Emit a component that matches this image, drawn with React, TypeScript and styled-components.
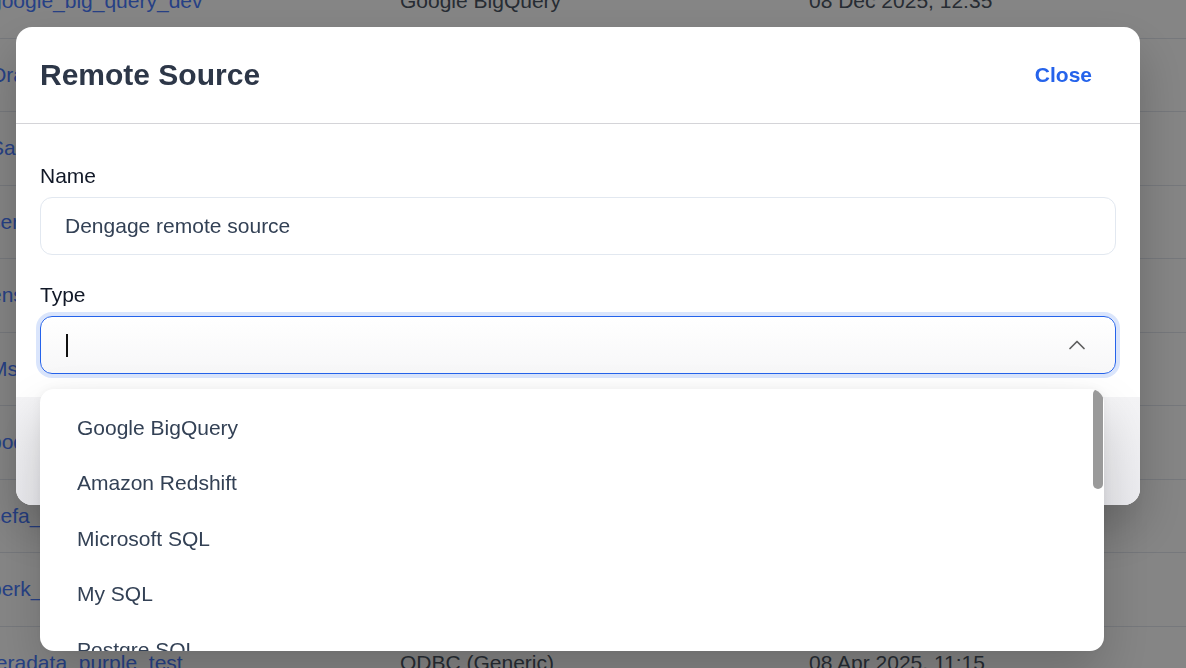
import React from "react";
import styled, { createGlobalStyle } from "styled-components";
import { ChevronUp } from "lucide-react";

const GlobalStyle = createGlobalStyle`
  * { box-sizing: border-box; }
  html, body { margin: 0; padding: 0; background: #ffffff; }
  body {
    font-family: "Liberation Sans", Arial, Helvetica, sans-serif;
    overflow: hidden;
  }
`;

const Page = styled.div`
  position: relative;
  width: 1186px;
  height: 668px;
  overflow: hidden;
  background: #ffffff;
`;

/* Sources table behind the dialog (scrolled part way down) */
const Table = styled.div`
  margin-top: -35px;
  margin-left: -10px;
`;

const Row = styled.div`
  display: grid;
  grid-template-columns: 410px 409px 1fr;
  align-items: center;
  height: 73.5px;
  border-bottom: 1px solid #e2e6ee;
  font-size: 21px;
`;

const SourceLink = styled.a`
  color: #4a7cff;
  text-decoration: none;
  white-space: nowrap;
`;

const Cell = styled.span`
  color: #4b5563;
  white-space: nowrap;
`;

const Backdrop = styled.div`
  position: fixed;
  inset: 0;
  background: rgba(0, 0, 0, 0.48);
  display: flex;
  align-items: flex-start;
  padding: 27px 46px 0 16px;
`;

const Modal = styled.div`
  width: 1124px;
  background: #ffffff;
  border-radius: 16px;
  box-shadow: 0 24px 48px rgba(0, 0, 0, 0.22);
  display: flex;
  flex-direction: column;
`;

const Header = styled.header`
  height: 97px;
  display: flex;
  align-items: center;
  justify-content: space-between;
  padding: 0 0 0 24px;
  border-bottom: 1px solid #d4d4d8;
`;

const Title = styled.h2`
  margin: 0;
  font-size: 30px;
  font-weight: 700;
  color: #2d3748;
`;

const CloseButton = styled.button`
  border: none;
  background: none;
  padding: 8px 48px 8px 24px;
  font-family: inherit;
  font-size: 21px;
  font-weight: 700;
  color: #2563eb;
  cursor: pointer;
`;

const Body = styled.div`
  display: flex;
  flex-direction: column;
  gap: 28px;
  padding: 40px 24px 23px;
`;

const Field = styled.div`
  display: flex;
  flex-direction: column;
  gap: 9px;
`;

const Label = styled.label`
  font-size: 21px;
  line-height: 24px;
  color: #111827;
`;

const TextInput = styled.input`
  height: 58px;
  width: 100%;
  border: 1px solid #e2e8f0;
  border-radius: 12px;
  padding: 0 24px;
  font-family: inherit;
  font-size: 21px;
  color: #334155;
  background: #ffffff;
  outline: none;
`;

const SelectWrap = styled.div`
  position: relative;
`;

const SelectControl = styled.div`
  height: 58px;
  display: flex;
  align-items: center;
  justify-content: space-between;
  padding: 0 24px 0 24.5px;
  border: 1.5px solid #2563eb;
  border-radius: 12px;
  background: linear-gradient(#ffffff, #f7f7f8);
  box-shadow: 0 0 0 4px rgba(37, 99, 235, 0.17);
`;

const Caret = styled.span`
  width: 2px;
  height: 23px;
  background: #111111;
`;

const Chevron = styled(ChevronUp)`
  color: #5f5f5f;
`;

/* Dropdown panel floating under the combobox */
const Popover = styled.div`
  position: absolute;
  top: calc(100% + 15px);
  left: 0;
  right: 12px;
  background: #ffffff;
  border-radius: 14px;
  overflow: hidden;
  box-shadow: 0 0 10px rgba(0, 0, 0, 0.05), 0 26px 52px rgba(0, 0, 0, 0.18);
  z-index: 2;
`;

const Listbox = styled.ul`
  max-height: 262px;
  margin: 0;
  padding: 11px 0;
  list-style: none;
  overflow-y: auto;
  scrollbar-width: none;
`;

const ScrollThumb = styled.span`
  position: absolute;
  top: 0;
  right: 1px;
  width: 10px;
  height: 100px;
  border-radius: 5px;
  background: #9a9a9a;
`;

const Option = styled.li`
  padding: 0 37px;
  height: 55.5px;
  display: flex;
  align-items: center;
  font-size: 21px;
  color: #334155;
  cursor: pointer;
`;

const Footer = styled.footer`
  height: 108px;
  background: linear-gradient(#f4f4f6, #ececf0);
  border-radius: 0 0 16px 16px;
`;

const rows = [
  ["google_big_query_dev", "Google BigQuery", "08 Dec 2025, 12:35"],
  ["Oracle_remote", "Oracle", "02 Dec 2025, 09:10"],
  ["Salesforce_crm", "Salesforce", "27 Nov 2025, 16:42"],
  ["server_logs", "Vertica", "21 Nov 2025, 10:05"],
  ["ens_events", "Amazon Redshift", "14 Nov 2025, 14:28"],
  ["MsSQL_prod", "Microsoft SQL", "03 Nov 2025, 11:51"],
  ["pod_metrics", "Postgre SQL", "19 Oct 2025, 08:33"],
  ["sefa_test", "My SQL", "30 Sep 2025, 17:20"],
  ["berk_mssql", "Microsoft SQL", "12 Jun 2025, 13:02"],
  ["teradata_purple_test", "ODBC (Generic)", "08 Apr 2025, 11:15"],
];

const sourceTypes = [
  "Google BigQuery",
  "Amazon Redshift",
  "Microsoft SQL",
  "My SQL",
  "Postgre SQL",
  "Oracle",
  "Snowflake",
  "Teradata",
  "Vertica",
  "SAP HANA",
  "ClickHouse",
  "ODBC (Generic)",
];

export default function App() {
  return (
    <Page>
      <GlobalStyle />
      <Table>
        {rows.map(([name, type, date]) => (
          <Row key={name}>
            <SourceLink href="#">{name}</SourceLink>
            <Cell>{type}</Cell>
            <Cell>{date}</Cell>
          </Row>
        ))}
      </Table>

      <Backdrop>
        <Modal role="dialog" aria-modal="true">
          <Header>
            <Title>Remote Source</Title>
            <CloseButton type="button">Close</CloseButton>
          </Header>
          <Body>
            <Field>
              <Label htmlFor="source-name">Name</Label>
              <TextInput id="source-name" defaultValue="Dengage remote source" readOnly />
            </Field>
            <Field>
              <Label>Type</Label>
              <SelectWrap>
                <SelectControl role="combobox" aria-expanded="true">
                  <Caret />
                  <Chevron size={28} strokeWidth={1.5} />
                </SelectControl>
                <Popover>
                  <Listbox role="listbox">
                    {sourceTypes.map((t) => (
                      <Option key={t} role="option">
                        {t}
                      </Option>
                    ))}
                  </Listbox>
                  <ScrollThumb />
                </Popover>
              </SelectWrap>
            </Field>
          </Body>
          <Footer />
        </Modal>
      </Backdrop>
    </Page>
  );
}
